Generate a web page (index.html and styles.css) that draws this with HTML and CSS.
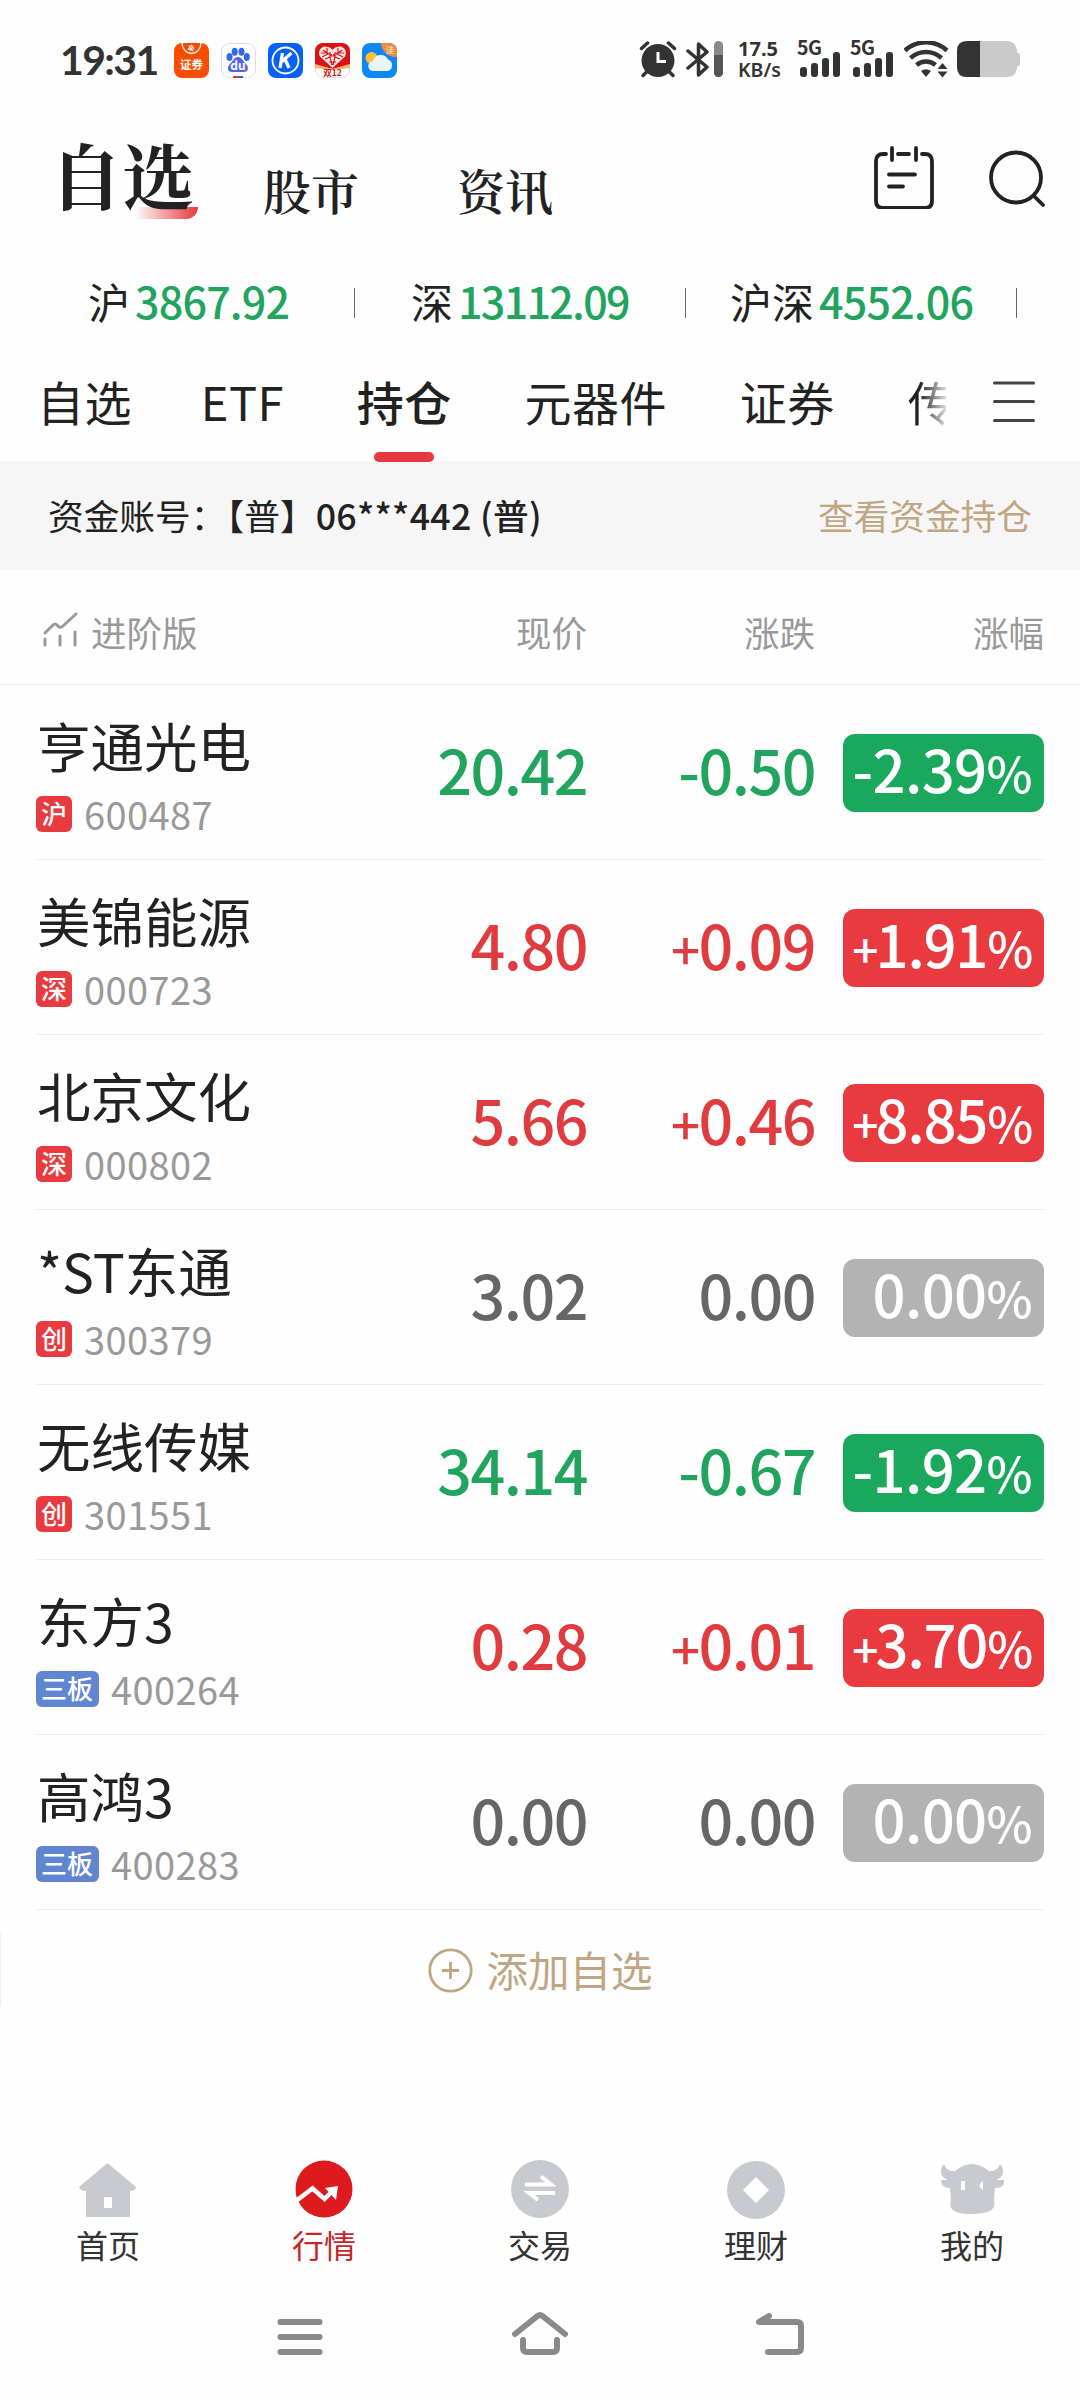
FILE: index.html
```html
<!DOCTYPE html>
<html lang="zh-CN">

<head>
  <meta charset="UTF-8">
  <meta name="viewport" content="width=device-width, initial-scale=1.0">
  <title>行情 - 持仓</title>
  <link rel="stylesheet" href="styles.css">
</head>

<body>
  <!-- 状态栏 -->
  <div class="status">
    <span class="clock">19:31</span>
    <div class="apps">
      <svg width="35" height="35" viewBox="0 0 35 35">
        <rect width="35" height="35" rx="8" fill="#fc4c02" />
        <path d="M8 0a9.500 10.500 0 0 0 19 0" fill="none" stroke="#fff" stroke-width="1.300" />
        <path d="M15 3l4 5M17 2l3 4M14 5.500l3 2" stroke="#fff" stroke-width="1.400" />
        <text x="17.500" y="26" font-size="11.500" font-weight="700" fill="#fff" text-anchor="middle">证券</text>
      </svg>
      <svg width="35" height="35" viewBox="0 0 35 35">
        <rect x=".5" y=".5" width="34" height="34" rx="8" fill="#fff" stroke="#ddd" />
        <g fill="#3068ea">
          <ellipse cx="8.500" cy="14" rx="3" ry="3.900" />
          <ellipse cx="13.700" cy="8.800" rx="3" ry="4" />
          <ellipse cx="20.500" cy="8.800" rx="3" ry="4" />
          <ellipse cx="25.800" cy="14" rx="3" ry="3.900" />
        </g>
        <path d="M17 14c4 0 5 4 8 7s2.500 8-2 8H11c-5 0-5-5-2-8s4-7 8-7z" fill="#5265ea" />
        <text x="17" y="27" font-size="12" font-weight="700" fill="#fff" text-anchor="middle">du</text>
        <path d="M12 34h5" stroke="#e33" stroke-width="2" />
        <path d="M17 34h5" stroke="#2b62d9" stroke-width="2" />
      </svg>
      <svg width="35" height="35" viewBox="0 0 35 35">
        <rect width="35" height="35" rx="8" fill="#0561f5" />
        <circle cx="17.500" cy="17.500" r="13" fill="none" stroke="#fff" stroke-width="1.800" />
        <path d="M14.500 10l-2.500 15M23.500 10l-9.500 8.500M17 16l4 9" stroke="#fff" stroke-width="3.300" fill="none" />
      </svg>
      <svg width="35" height="35" viewBox="0 0 35 35">
        <rect x=".5" y=".5" width="34" height="34" rx="8" fill="#fff" stroke="#ddd" />
        <path d="M8 0h19a8 8 0 0 1 8 8v14l-17 4-18-4V8a8 8 0 0 1 8-8z" fill="#dd1115" />
        <path d="M0 21l17 5 18-5v4l-18 2L0 25z" fill="#f6b26b" />
        <path d="M17.500 25L5 13.500C2 8 7 2 12 4c3 0 5 2 5.500 3C18 6 20 4 23 4c5-2 10 4 7 9.500z" fill="#fbe9e4" />
        <path d="M8 7l5 4-6 3M12 5v5l5 2M27 7l-5 4 6 3M23 5v5l-5 2M10 16l5-2 2 8M25 16l-5-2-2 8M6 10h5M24 10h5M14 19h7M15 9v4h5V9"
          fill="none" stroke="#dd1115" stroke-width="1.200" />
        <text x="17.500" y="32.500" font-size="8.500" font-weight="700" fill="#d81418" text-anchor="middle">双12</text>
      </svg>
      <svg width="35" height="35" viewBox="0 0 35 35">
        <rect width="35" height="35" rx="8" fill="#0c87f5" />
        <path d="M19 0h8a8 8 0 0 1 8 8v6A15 15 0 0 1 19 0z" fill="#f08c3c" />
        <text x="28" y="10" font-size="8" fill="#fff" text-anchor="middle">洼</text>
        <circle cx="9.500" cy="15" r="6" fill="#fdc02f" />
        <path d="M11.500 28a5 5 0 0 1-.5-10 8 8 0 0 1 15-1.500 6 6 0 0 1-.5 11.500z" fill="#eaf4ff" />
      </svg>
    </div>
    <div class="signals">
      <svg class="alarm" width="38" height="37" viewBox="0 0 38 37" fill="none" stroke="#333">
        <circle cx="19" cy="19.500" r="16.500" fill="#333" stroke="none" />
        <path d="M2.500 7.500l6-5.500M29.500 2l6 5.500" stroke-width="3.500" stroke-linecap="round" />
        <path d="M7.500 31L4 34.500M30.500 31l3.500 3.500" stroke-width="3.500" stroke-linecap="round" />
        <path d="M19 11v9.500h8" stroke="#fff" stroke-width="3" />
      </svg>
      <svg class="bluetooth" width="37" height="37" viewBox="0 0 37 37">
        <path d="M2 10l19 16-8.500 8V3l8.500 8L2 27" fill="none" stroke="#333" stroke-width="3.500" stroke-linejoin="round"
          stroke-linecap="round" />
        <rect x="28" y="0" width="9" height="36" rx="4.500" fill="#8a8a8a" />
        <path d="M28 14h9v17.500a4.500 4.500 0 0 1-9 0z" fill="#555" />
      </svg>
      <div class="speed"><b>17.5</b><span>KB/s</span></div>
      <svg class="cell" width="43" height="37" viewBox="0 0 43 37" fill="#333">
        <text x="-1" y="14" font-size="19.500" font-weight="700" textLength="25">5G</text>
        <rect x="2" y="26" width="7" height="10" rx="3" />
        <rect x="13" y="22" width="7" height="14" rx="3" />
        <rect x="24" y="17" width="7" height="19" rx="3" />
        <rect x="35" y="11" width="7" height="25" rx="3" />
      </svg>
      <svg class="cell" width="43" height="37" viewBox="0 0 43 37" fill="#333">
        <text x="-1" y="14" font-size="19.500" font-weight="700" textLength="25">5G</text>
        <rect x="2" y="26" width="7" height="10" rx="3" />
        <rect x="13" y="22" width="7" height="14" rx="3" />
        <rect x="24" y="17" width="7" height="19" rx="3" />
        <rect x="35" y="11" width="7" height="25" rx="3" />
      </svg>
      <svg class="wifi" width="45" height="37" viewBox="0 0 45 37" fill="none" stroke="#333" stroke-width="4.500">
        <path d="M1 9.500a31 31 0 0 1 42 0M6.500 17a23 23 0 0 1 31 0M12.500 24a15 15 0 0 1 19 0" />
        <path d="M17 30q5-3.500 10 0l-5 6z" fill="#333" stroke="none" />
        <path d="M33.500 28l5-6 5 6zM33.500 30.500l5 6 5-6z" fill="#333" stroke="none" />
      </svg>
      <svg class="battery" width="63" height="37" viewBox="0 0 63 37">
        <path d="M10 0h40q9 0 10 10v1.500q3 0 3 3v8q0 3-3 3V27q-1 9-10 9H10q-10 0-10-10V10Q0 0 10 0z" fill="#cacaca" />
        <path d="M10 0h13v36H10Q0 36 0 26V10Q0 0 10 0z" fill="#333" />
      </svg>
    </div>
  </div>

  <!-- 顶部导航 -->
  <div class="top">
    <span class="big">自选<i></i></span>
    <span class="sub">股市</span>
    <span class="sub">资讯</span>
    <div class="tools">
      <svg width="60" height="63" viewBox="0 0 60 63" fill="none" stroke="#222" stroke-width="3.800" stroke-linecap="round">
        <path d="M12 8H9q-7 0-7 7v40q0 7 7 7h42q7 0 7-7V15q0-7-7-7h-3M24 8h11" />
        <path d="M18 2v12M42 2v12M15 28.500h26M15 40.500h14" />
      </svg>
      <svg width="56" height="63" viewBox="0 0 56 63" fill="none" stroke="#222" stroke-width="3.800" stroke-linecap="round">
        <circle cx="27" cy="31.500" r="25" />
        <path d="M45 50l9 9" />
      </svg>
    </div>
  </div>

  <!-- 指数 -->
  <div class="index">
    <div class="cell-sh">沪<b>3867.92</b></div><i></i>
    <div class="cell-sz">深<b>13112.09</b></div><i></i>
    <div class="cell-hs">沪深<b>4552.06</b></div><i></i>
  </div>

  <!-- 分组 -->
  <div class="tabs">
    <span>自选</span>
    <span>ETF</span>
    <span class="active">持仓</span>
    <span>元器件</span>
    <span>证券</span>
    <span class="cut">传</span>
    <svg width="42" height="42" viewBox="0 0 42 42" stroke="#444" stroke-width="3" stroke-linecap="round">
      <path d="M1.500 2h39M1.500 20.500h39M1.500 39.500h39" />
    </svg>
  </div>

  <div class="account">
    <span>资金账号：<u>【普】</u><b>06***442 (普)</b></span>
    <a>查看资金持仓</a>
  </div>

  <div class="thead">
    <svg width="35" height="36" viewBox="0 0 35 36" fill="none" stroke="#999" stroke-width="3" stroke-linecap="round">
      <path d="M2 21l8-8q2-2 4 0l2 2q2 1 4-1L33 2M2 27v6M17 24v9M32 20v13" />
    </svg>
    <span class="name">进阶版</span>
    <span class="price">现价</span>
    <span class="change">涨跌</span>
    <span class="range">涨幅</span>
  </div>

  <!-- 持仓列表 -->
  <div class="list">
    <div class="item down">
      <div class="info">
        <p class="name">亨通光电</p>
        <p class="code"><i>沪</i>600487</p>
      </div>
      <span class="price">20.42</span>
      <span class="change">-0.50</span>
      <span class="range">-2.39<em>%</em></span>
    </div>
    <div class="item up">
      <div class="info">
        <p class="name">美锦能源</p>
        <p class="code"><i>深</i>000723</p>
      </div>
      <span class="price">4.80</span>
      <span class="change"><s>+</s>0.09</span>
      <span class="range"><s>+</s>1.91<em>%</em></span>
    </div>
    <div class="item up">
      <div class="info">
        <p class="name">北京文化</p>
        <p class="code"><i>深</i>000802</p>
      </div>
      <span class="price">5.66</span>
      <span class="change"><s>+</s>0.46</span>
      <span class="range"><s>+</s>8.85<em>%</em></span>
    </div>
    <div class="item flat">
      <div class="info">
        <p class="name">*ST东通</p>
        <p class="code"><i>创</i>300379</p>
      </div>
      <span class="price">3.02</span>
      <span class="change">0.00</span>
      <span class="range">0.00<em>%</em></span>
    </div>
    <div class="item down">
      <div class="info">
        <p class="name">无线传媒</p>
        <p class="code"><i>创</i>301551</p>
      </div>
      <span class="price">34.14</span>
      <span class="change">-0.67</span>
      <span class="range">-1.92<em>%</em></span>
    </div>
    <div class="item up">
      <div class="info">
        <p class="name">东方3</p>
        <p class="code"><i class="blue">三板</i>400264</p>
      </div>
      <span class="price">0.28</span>
      <span class="change"><s>+</s>0.01</span>
      <span class="range"><s>+</s>3.70<em>%</em></span>
    </div>
    <div class="item flat">
      <div class="info">
        <p class="name">高鸿3</p>
        <p class="code"><i class="blue">三板</i>400283</p>
      </div>
      <span class="price">0.00</span>
      <span class="change">0.00</span>
      <span class="range">0.00<em>%</em></span>
    </div>
  </div>

  <div class="add">
    <svg width="45" height="45" viewBox="0 0 45 45" fill="none" stroke="#bfa685" stroke-width="2.800">
      <circle cx="22.500" cy="22.500" r="20.700" />
      <path d="M14 22.500h17M22.500 14v17" />
    </svg>
    <span>添加自选</span>
  </div>

  <!-- 底部导航 -->
  <div class="nav">
    <div class="link">
      <svg width="64" height="60" viewBox="0 0 64 60">
        <path d="M31.500 4L60 28q0 4-6 4v26H10V32q-6 0-7-4z" fill="#c9cad0" />
        <path d="M28 38h8v11h-8z" fill="#fff" />
      </svg>
      <span>首页</span>
    </div>
    <div class="link on">
      <svg width="64" height="60" viewBox="0 0 64 60">
        <circle cx="32" cy="30" r="28.500" fill="#dd1a1d" />
        <path d="M4 42l16.500-12.500L32.500 40l8-8" fill="none" stroke="#fff" stroke-width="4.500" />
        <path d="M46 27l-2 14-11-12z" fill="#fff" />
      </svg>
      <span>行情</span>
    </div>
    <div class="link">
      <svg width="64" height="60" viewBox="0 0 64 60">
        <circle cx="32" cy="30" r="29" fill="#c9cad0" />
        <path d="M17 25.500h26l-10-8M47 34H21l9 7" fill="none" stroke="#fff" stroke-width="4" />
      </svg>
      <span>交易</span>
    </div>
    <div class="link">
      <svg width="64" height="60" viewBox="0 0 64 60">
        <circle cx="32" cy="31" r="29" fill="#c9cad0" />
        <path d="M32 18l13 13-13 13-13-13z" fill="#fff" />
      </svg>
      <span>理财</span>
    </div>
    <div class="link">
      <svg width="64" height="60" viewBox="0 0 64 60">
        <path d="M4 5q2 6 8 7h3q17-14 34 0h3q6-1 8-7 4 4 3 9-1 5-7 7h8q1 8-9 8l-1 12q4 14-22 14T11 41l-1-12q-9 0-9-8h7q-6-2-7-7-1-5 3-9z"
          fill="#c9cad0" />
        <path d="M21 22h4v9h-4zM43 22v9q-7-4.500 0-9z" fill="#fff" />
      </svg>
      <span>我的</span>
    </div>
  </div>

  <!-- 系统按键 -->
  <div class="keys">
    <svg width="60" height="50" viewBox="0 0 60 50">
      <path d="M10.500 15h39M10.500 30h39M10.500 45h39" />
    </svg>
    <svg width="60" height="50" viewBox="0 0 60 50">
      <path d="M5 27L27.500 9q2.500-2 5 0L55 27M13 33v8q0 4 4 4h26q4 0 4-4v-8" />
    </svg>
    <svg width="60" height="50" viewBox="0 0 60 50">
      <path d="M19 9L9 15h38q4 0 4 4v22q0 4-4 4H18" />
    </svg>
  </div>
</body>

</html>
```
FILE: styles.css
```css
* {
  box-sizing: border-box;
  margin: 0;
  padding: 0;
}

body {
  width: 1080px;
  height: 2400px;
  overflow: hidden;
  background: #fefefe;
  color: #222;
  font-family: "Noto Sans CJK SC", sans-serif;
  display: flex;
  flex-direction: column;
}

svg {
  display: block;
  flex: none;
}

i,
em,
s,
u {
  font-style: normal;
  text-decoration: none;
}

b {
  font-weight: 500;
}

/* 状态栏 */
.status {
  height: 120px;
  padding: 0 60px 0 60px;
  display: flex;
  align-items: center;
  color: #333;
}

.clock {
  width: 114px;
  font: 700 41px/60px Lato, sans-serif;
  letter-spacing: -1.6px;
}

.apps {
  display: flex;
  gap: 12px;
}

.signals {
  display: flex;
  margin-left: auto;
}

.alarm {
  margin-right: 9px;
}

.bluetooth {
  margin-right: 15px;
}

.speed {
  width: 60px;
  display: flex;
  flex-direction: column;
  font-family: "Noto Sans", sans-serif;
  font-size: 19.5px;
  line-height: 21px;
  font-weight: 600;
  margin-top: -3px;
}

.speed b {
  font-size: 20px;
  font-weight: 700;
}

.cell {
  margin-right: 10px;
  overflow: visible;
}

.wifi {
  margin-right: 8px;
}

/* 顶部导航 */
.top {
  height: 120px;
  padding: 0 35px 0 50px;
  display: flex;
  font-family: "Noto Serif CJK SC", "Noto Sans CJK SC", serif;
  font-weight: 600;
}

.top .big {
  width: 213px;
  position: relative;
  font-size: 72px;
  font-weight: 700;
  line-height: 106px;
}

.top .big i {
  position: absolute;
  left: 84px;
  top: 87px;
  width: 64px;
  height: 12px;
  border-radius: 0 0 16px 0;
  background: linear-gradient(90deg, #fff, #e5383e);
  z-index: -1;
}

.top .sub {
  width: 194px;
  font-size: 48px;
  line-height: 139px;
}

.tools {
  margin-left: auto;
  display: flex;
  gap: 55px;
  padding-top: 26px;
}

/* 指数 */
.index {
  height: 126px;
  padding-left: 88px;
  display: flex;
  align-items: center;
  font-size: 42px;
  line-height: 60px;
  padding-bottom: 6px;
  white-space: nowrap;
}

.index b {
  color: #21a45d;
  font-size: 43px;
  letter-spacing: -.8px;
  margin-left: 5px;
}

.index i {
  width: 1px;
  height: 30px;
  background: #666;
  margin-top: 6px;
}

.cell-sh {
  width: 266px;
}

.cell-sz {
  width: 330px;
  padding-left: 56px;
}

.index .cell-sz b {
  letter-spacing: -1.7px;
}

.cell-hs {
  width: 330px;
  padding-left: 44px;
}

/* 分组 */
.tabs {
  height: 95px;
  padding-left: 37px;
  display: flex;
  font-size: 47px;
  letter-spacing: .4px;
  line-height: 70px;
  white-space: nowrap;
}

.tabs span {
  margin-right: 73px;
}

.tabs span:first-child {
  margin-right: 69px;
}

.tabs .active {
  font-weight: 500;
  position: relative;
}

.tabs .active::after {
  content: "";
  position: absolute;
  left: 17px;
  top: 86px;
  width: 60px;
  height: 10px;
  border-radius: 5px;
  background: #e5383e;
}

.tabs .cut {
  width: 38px;
  margin-right: 47px;
  overflow: hidden;
  color: transparent;
  background: linear-gradient(90deg, #222 30%, #ddd);
  background-clip: text;
  -webkit-background-clip: text;
}

.tabs svg {
  margin-top: 15px;
}

.account {
  height: 109px;
  padding: 0 48px 2px 48px;
  display: flex;
  align-items: center;
  justify-content: space-between;
  background: #f6f6f6;
  font-size: 35.7px;
}

.account b {
  letter-spacing: .3px;
}

.account a {
  color: #c0a681;
}

.thead {
  height: 115px;
  padding: 8px 36px 0 43px;
  display: flex;
  align-items: center;
  border-bottom: 1px solid #eee;
  color: #999;
  font-size: 35.5px;
}

.thead svg {
  margin-top: -2px;
}

.thead .name {
  margin-left: 13px;
  flex: 1;
}

.thead .change {
  width: 228px;
  text-align: right;
}

.thead .range {
  width: 229px;
  text-align: right;
}

/* 持仓列表 */
.list {
  padding: 0 36px;
}

.item {
  height: 175px;
  display: flex;
  border-bottom: 1px solid #eee;
}

.item .info {
  width: 300px;
}

.item .name {
  font-size: 53.5px;
  line-height: 80px;
  margin-top: 20px;
  padding-left: 1px;
}

.item .code {
  display: flex;
  align-items: center;
  gap: 12px;
  height: 36px;
  margin-top: 11px;
  color: #999;
  font-size: 38px;
  letter-spacing: .4px;
  line-height: 32px;
}

.item .code i {
  height: 36px;
  padding: 0 5px;
  border-radius: 6px;
  background: #e83a3f;
  color: #fff;
  font-size: 26px;
  font-weight: 500;
  letter-spacing: 0;
  line-height: 34px;
}

.item .code .blue {
  background: #6086d2;
  padding: 0 6px 0 5px;
}

.item .price,
.item .change {
  width: 251px;
  font-size: 61px;
  font-weight: 500;
  letter-spacing: -1.5px;
  line-height: 168px;
  text-align: right;
}

.item .change {
  width: 228px;
}

.item s {
  font-size: 51px;
}

.item .range {
  width: 201px;
  height: 78px;
  margin: 49px 0 0 28px;
  padding-right: 12px;
  border-radius: 12px;
  color: #fff;
  font-size: 58px;
  font-weight: 500;
  letter-spacing: -.6px;
  line-height: 68px;
  text-align: right;
  white-space: nowrap;
}

.item .range s {
  font-size: 46px;
  letter-spacing: -3px;
}

.item .range em {
  font-size: 49px;
}

.up {
  color: #e03c40;
}

.up .range {
  background: #e83a3f;
}

.up .range {
  letter-spacing: -1.2px;
}

.down {
  color: #21a45d;
}

.down .range {
  background: #1aa85c;
}

.flat {
  color: #666;
}

.flat .range {
  background: #b3b3b3;
}

.item .name {
  color: #222;
}

.add {
  height: 72px;
  margin-top: 24px;
  border-left: 1px solid #eee;
  display: flex;
  align-items: center;
  justify-content: center;
  gap: 13px;
  color: #bfa685;
  font-size: 41.5px;
}

.add span {
  margin-top: -3px;
}

/* 底部导航 */
.nav {
  margin-top: 153px;
  display: flex;
}

.link {
  flex: 1;
  display: flex;
  flex-direction: column;
  align-items: center;
  font-size: 32px;
  line-height: 46px;
  color: #333;
}

.link span {
  margin-top: 2px;
}

.link.on {
  color: #c4282b;
}

.keys {
  margin-top: 40px;
  padding: 0 180px;
  display: flex;
  justify-content: space-around;
}

.keys path {
  fill: none;
  stroke: #8a8a8a;
  stroke-width: 6;
  stroke-linecap: round;
  stroke-linejoin: round;
}
```
